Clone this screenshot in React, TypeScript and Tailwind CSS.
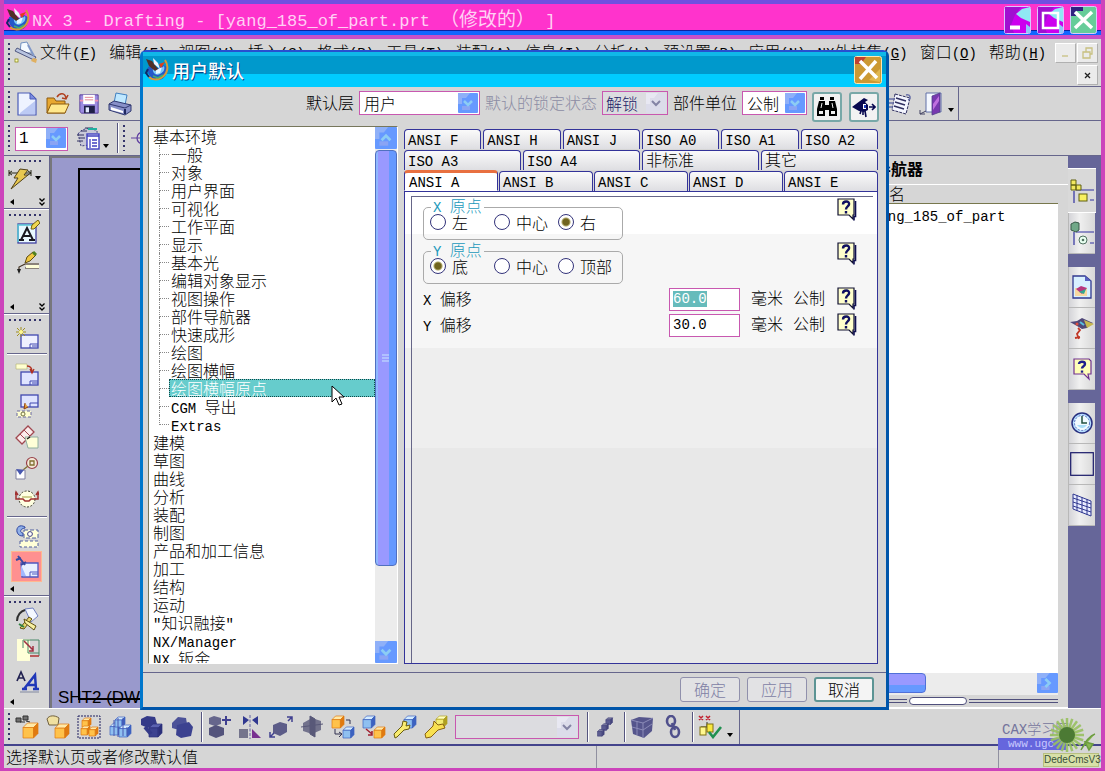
import { useEffect, useRef, useState } from 'react';
import type { ReactNode } from 'react';

/* Mixed text: Latin runs are set in a monospaced face, about half the width of a CJK glyph. */
function T({ children, big }: { children: string; big?: boolean }) {
  const parts = children.match(/[\x00-\x7f]+|[^\x00-\x7f]+/g) ?? [];
  return (
    <>
      {parts.map((p, i) =>
        p.charCodeAt(0) < 128 ? (
          <span
            key={i}
            className={
              big
                ? "font-['Liberation_Mono',monospace] text-[17px] whitespace-pre"
                : "font-['Liberation_Mono',monospace] text-sm leading-none whitespace-pre"
            }
          >
            {p}
          </span>
        ) : (
          <span key={i}>{p}</span>
        ),
      )}
    </>
  );
}

function Svg({ children, size = 'm' }: { children: ReactNode; size?: 'm' | 's' | 'l' }) {
  return (
    <svg
      viewBox="0 0 24 24"
      aria-hidden="true"
      className={size === 'l' ? 'h-[26px] w-[26px] shrink-0' : size === 's' ? 'h-5 w-5 shrink-0' : 'h-6 w-6 shrink-0'}
    >
      {children}
    </svg>
  );
}

const TONES: Record<string, [string, string, string]> = {
  gold: ['#ffe9a8', '#ffc24a', '#e07a10'],
  blue: ['#d4ecff', '#8fc0f0', '#3c62c0'],
  dark: ['#7a7aa0', '#5c5c90', '#44447c'],
  navy: ['#5a62b0', '#3c4290', '#2c307c'],
  gray: ['#9090a8', '#6c6c88', '#585878'],
  lemon: ['#ffffc0', '#f4ec70', '#b0a020'],
};

function Cube({ x, y, s, t }: { x: number; y: number; s: number; t: string }) {
  const [a, b, c] = TONES[t];
  const d = s * 0.3;
  return (
    <g transform={`translate(${x} ${y})`} stroke={c} strokeWidth="0.7" strokeLinejoin="round">
      <path d={`M0 ${d} L${d} 0 H${s} L${s - d} ${d}Z`} fill={a} />
      <path d={`M0 ${d} H${s - d} V${s} H0Z`} fill={b} />
      <path d={`M${s - d} ${d} L${s} 0 V${s - d} L${s - d} ${s}Z`} fill={c} />
    </g>
  );
}

function NxLogo() {
  return (
    <Svg>
      <path d="M3 9c-1 8 4 14 11 13 6-1 9-7 8-13l-4-2-6 3-5-2z" fill="#2458c8" />
      <path d="M8 10c-1 5 3 8 7 6s5-5 4-8l-5 4z" fill="#7cc8f8" />
      <path d="M11 12l6-3-2 6-4 1z" fill="#e8f8ff" />
      <path d="M20 2c4 6 3 14-4 18-4 2-9 2-12-1" fill="none" stroke="#d89838" strokeWidth="2" />
      <path d="M1 1l6 2 6 8-3 2-6-5z" fill="#503028" />
      <path d="M8 0l5 5 2 6-6-5z" fill="#f0f4ff" />
      <path d="M14 6l6-2-4 6z" fill="#e04018" />
      <path d="M3 11l-2 4 3 4" fill="none" stroke="#102868" strokeWidth="2" />
      <path d="M8 18l5 2 5-3" stroke="#40b070" strokeWidth="1.5" fill="none" />
    </Svg>
  );
}

const I: Record<string, ReactNode> = {
  draft: (
    <>
      <path d="M7 2l6-1 5 11H6z" fill="#f4faff" stroke="#7090c0" />
      <path d="M3 7l-2 3 19 9 2-3z" fill="#b8c4e0" stroke="#505880" />
      <path d="M14 4l6 11" stroke="#8098c8" strokeWidth="2" />
      <path d="M19 17l4 1-1 4-5-2z" fill="#e0b060" />
      <rect x="1" y="18" width="3" height="3" fill="#ffffc0" stroke="#808000" strokeWidth="0.7" />
    </>
  ),
  new: (
    <>
      <path d="M3 1h12l6 6v16H3z" fill="#eef3ff" stroke="#4a5cb8" strokeWidth="1.2" />
      <path d="M5 21L20 9v13H5z" fill="#bccaf4" />
      <path d="M15 1v6h6z" fill="#7c8ce0" stroke="#4a5cb8" />
    </>
  ),
  open: (
    <>
      <path d="M1 21V6h7l2 3h9v12z" fill="#e8a830" stroke="#8c5a10" />
      <path d="M1 21L5 12h18l-4 9z" fill="#ffe88c" stroke="#8c5a10" />
      <path d="M11 5c3-5 8-4 9 1m2-3l-2 4-4-1" fill="none" stroke="#b04020" strokeWidth="1.5" />
    </>
  ),
  save: (
    <>
      <path d="M1 1h22v22H3l-2-2z" fill="#9c8ce0" stroke="#4a3090" />
      <path d="M5 1h14v11H5z" fill="#fff" />
      <path d="M7 4h10M7 7h10" stroke="#e07080" />
      <path d="M6 14h13v9H6z" fill="#202048" />
      <path d="M8 16h4v6H8z" fill="#e0e8ff" />
      <path d="M1 8h4M19 8h4" stroke="#f090b0" strokeWidth="2" />
    </>
  ),
  print: (
    <>
      <path d="M8 1l11 2-2 10-11-2z" fill="#bfe8ff" stroke="#4080c0" />
      <path d="M1 12l5-3 17 4v6l-6 4-16-5z" fill="#8890c8" stroke="#303870" />
      <path d="M1 12l16 4 6-3" fill="none" stroke="#303870" />
      <path d="M3 15l12 4v2L3 18z" fill="#fff" />
      <path d="M17 17v5" stroke="#202860" strokeWidth="2" />
    </>
  ),
  layers: (
    <>
      <path d="M2 8c4-6 12-7 19-3l1 15-6 3-3-4-8 1z" fill="#c8c8d8" stroke="#404080" strokeDasharray="2 1.5" />
      <path d="M1 9h7M3 12h6M1 15h6M5 5h6M9 2h8" stroke="#303060" />
      <path d="M12 3h9" stroke="#20b0a0" strokeWidth="2" />
      <rect x="11" y="8" width="12" height="15" fill="#fff" stroke="#4040c0" strokeWidth="1.4" />
      <path d="M11 10h12M14 13v9M16 14h5M16 17h5M16 20h5" stroke="#4040c0" strokeWidth="1.3" />
    </>
  ),
  target: (
    <>
      <circle cx="14" cy="12" r="6" fill="none" stroke="#6040a0" strokeWidth="1.3" />
      <path d="M2 12h22M14 3v18" stroke="#6040a0" />
    </>
  ),
  bolt: (
    <>
      <path d="M1 7h22M1 4v6M23 4v6M4 5L1 7l3 2M20 5l3 2-3 2" fill="none" stroke="#282818" />
      <path d="M12 3l8 1-4 5h4L3 23l7-11H6z" fill="#e8c850" stroke="#504018" />
    </>
  ),
  textA: (
    <>
      <rect x="2" y="4" width="18" height="19" fill="#e8f8ff" stroke="#4040a0" strokeWidth="1.3" />
      <path d="M2 22V5h17" fill="none" stroke="#58c8d8" strokeWidth="1.5" />
      <path d="M5 20l6-12 6 12M7 16h7M3 20h5M13 20h6" fill="none" stroke="#181820" strokeWidth="2" />
      <path d="M15 9l1-4 6-5 2 3-6 6z" fill="#f0d850" stroke="#706010" />
    </>
  ),
  pencil: (
    <>
      <path d="M23 13H9l-6 3v5M9 17h14" fill="none" stroke="#403020" strokeWidth="1.2" />
      <path d="M10 14h13v3H10z" fill="#ffffd8" />
      <path d="M1 18l2 5 2-5z" fill="#202020" />
      <path d="M9 12l2-6 6-5 3 3-6 6z" fill="#f0c840" stroke="#604c10" />
      <path d="M17 1l3 3" stroke="#508020" strokeWidth="3" />
    </>
  ),
  sheetNew: (
    <>
      <rect x="6" y="9" width="17" height="13" fill="#eef0ff" stroke="#4048b0" strokeWidth="1.3" />
      <path d="M15 18h8M15 18v4M17 20h6" stroke="#4048b0" />
      <path d="M6 1v10M1 6h10M2 2l8 8M10 2l-8 8" stroke="#a09020" />
      <circle cx="6" cy="6" r="2" fill="#fff890" />
    </>
  ),
  sheetOpen: (
    <>
      <rect x="6" y="9" width="17" height="13" fill="#dfe4ff" stroke="#4048b0" strokeWidth="1.3" />
      <path d="M15 18h8M15 18v4M17 20h6" stroke="#4048b0" />
      <path d="M1 1h11v5H1z" fill="#ffffd0" stroke="#b0b070" strokeWidth="0.6" />
      <path d="M12 3c4 0 5 2 5 6m-2-3l2 4 2-4" fill="none" stroke="#b03020" strokeWidth="1.3" />
    </>
  ),
  sheetDown: (
    <>
      <rect x="6" y="1" width="17" height="12" fill="#dfe4ff" stroke="#4048b0" strokeWidth="1.3" />
      <path d="M15 9h8M15 9v4" stroke="#4048b0" />
      <path d="M10 9l-1 6 4-2" fill="#e0a040" stroke="#904010" />
      <path d="M2 17h14v6H2z" fill="#ffffd0" stroke="#6868a0" strokeDasharray="3 2" />
      <circle cx="8" cy="20" r="2" fill="none" stroke="#707040" />
    </>
  ),
  section: (
    <>
      <path d="M1 13L13 1l6 6L7 19z" fill="#fbecec" stroke="#a04850" strokeWidth="1.3" />
      <path d="M5 9l6 6M9 5l6 6" stroke="#a04850" />
      <path d="M10 12h13v11H13z" fill="#ffffd8" stroke="#90b0a0" />
      <path d="M12 14l3-2" stroke="#202020" strokeWidth="1.5" />
    </>
  ),
  detail: (
    <>
      <circle cx="17" cy="7" r="5.5" fill="#f4e8d8" stroke="#984048" strokeWidth="1.2" />
      <path d="M15 5h4v4h-4zM13 10l-5 4" fill="none" stroke="#807030" strokeWidth="1.3" />
      <path d="M1 14h9v9H1z" fill="#fff" stroke="#8080a0" />
      <path d="M1 13l8 1-4 5z" fill="#4858b0" />
    </>
  ),
  revolve: (
    <>
      <circle cx="12" cy="12" r="8" fill="#ffffe0" stroke="#404030" strokeDasharray="2 1.5" />
      <path d="M1 6v6h7l2 2h4l2-2h7V6M0 8l1-3 2 3M21 8l2-3 1 3" fill="none" stroke="#a03030" strokeWidth="1.5" />
      <path d="M7 10h10" stroke="#a0a040" />
    </>
  ),
  views: (
    <>
      <path d="M10 3C5 0 1 3 2 8c1 3 3 4 6 4V9c-3 0-4-4 2-5z" fill="#90b0e8" stroke="#3048a0" />
      <path d="M9 6h14v8H9z" fill="#ffffd8" stroke="#5060a0" strokeDasharray="4 2" />
      <circle cx="15" cy="10" r="2.4" fill="#fff" stroke="#404080" />
      <path d="M5 17h18v6H5z" fill="#ffffd8" stroke="#5060a0" strokeDasharray="3 2" />
    </>
  ),
  sheetEdit: (
    <>
      <path d="M6 8h17v14H7z" fill="#e8f0ff" stroke="#5058c0" strokeWidth="1.3" />
      <path d="M15 17h8M15 17v5M17 19h6" stroke="#5058c0" />
      <path d="M3 1l7 9M1 5l5-2M6 10l5-3" stroke="#3848a0" strokeWidth="2" />
      <path d="M6 10v11h5z" fill="#a0b8ff" />
    </>
  ),
  tools: (
    <>
      <path d="M9 2l8-1 5 8-7 6z" fill="#f4f8ff" stroke="#7080c0" />
      <path d="M1 14C1 8 5 4 9 3" fill="none" stroke="#303030" strokeWidth="2" />
      <path d="M4 21l9-11 3 2-8 10z" fill="#e8d870" stroke="#605010" />
      <path d="M8 12l12 7-2 4-9-7z" fill="#f8f0a0" stroke="#605010" />
      <path d="M3 17l5 3" stroke="#308040" strokeWidth="2" />
    </>
  ),
  grid: (
    <>
      <path d="M1 1h13v22H1z" fill="#ffffd8" />
      <path d="M7 2h16v16M12 2v13h11M7 2v8" fill="none" stroke="#488868" />
      <path d="M8 3l9 9m0-4v5h-4" fill="none" stroke="#a03040" strokeWidth="1.5" />
      <path d="M14 18h9" stroke="#b03030" strokeWidth="1.5" />
    </>
  ),
  fonts: (
    <>
      <path d="M1 12l4-9 4 9M3 9h5" fill="none" stroke="#202050" strokeWidth="1.7" />
      <path d="M8 20L19 6l1 14M12 16h8M6 20h5M17 20h6" fill="none" stroke="#2038b8" strokeWidth="2.5" />
      <path d="M4 23h19" stroke="#8088a0" />
    </>
  ),
  scroll: (
    <>
      <path d="M7 2l15 4-4 16-14-4z" fill="#f4f6ff" stroke="#303060" strokeDasharray="3 1" />
      <path d="M8 6l10 3M7 10l10 3M6 14l10 3" stroke="#303060" strokeWidth="1.5" />
      <path d="M1 7h6M0 11h6M0 15h5M18 3c5-1 5 4 2 5" fill="none" stroke="#6870a8" strokeWidth="1.5" />
    </>
  ),
  door: (
    <>
      <path d="M7 1h15v19H7z" fill="#f4f8ff" stroke="#6070a8" />
      <path d="M13 4l8-3v19l-8 3z" fill="#7838b0" stroke="#504088" strokeWidth="0.8" />
      <path d="M14 12l6-8v5l-6 9z" fill="#c070e0" />
      <path d="M1 22l6-3M1 22v-4M1 22h5" stroke="#404060" fill="none" />
    </>
  ),
  findComp: (
    <>
      <path d="M1 3h5v4H1zM8 1h5v4H8zM5 7h5M11 6l4 1" fill="#707070" stroke="#303030" />
      <Cube x={8} y={8} s={15} t="gold" />
    </>
  ),
  openComp: (
    <>
      <path d="M1 4c2-4 8-4 12-1l-1 7H3z" fill="#f0e0a0" stroke="#706040" />
      <Cube x={9} y={9} s={14} t="gold" />
    </>
  ),
  boxed: (
    <>
      <rect x="1" y="1" width="22" height="22" fill="none" stroke="#202060" strokeDasharray="2 1" />
      <Cube x={5} y={3} s={9} t="gold" />
      <Cube x={4} y={11} s={9} t="gold" />
      <Cube x={12} y={12} s={9} t="gold" />
    </>
  ),
  wire: (
    <>
      <Cube x={2} y={8} s={12} t="blue" />
      <Cube x={7} y={2} s={10} t="blue" />
      <Cube x={11} y={10} s={12} t="blue" />
      <path d="M6 5v16M10 3v19M15 3v18M19 12v9" stroke="#4858b0" />
    </>
  ),
  navyCubes: (
    <>
      <path d="M2 4l6-3 8 1 2 7-9 4-7-3z" fill="#343a88" />
      <Cube x={10} y={9} s={13} t="navy" />
      <path d="M6 12l6 7" stroke="#343a88" strokeWidth="4" />
    </>
  ),
  navyCubes2: (
    <>
      <path d="M2 8l6-6 8 1 1 6-8 6-7-2z" fill="#4c5298" />
      <path d="M7 10l12-3 4 5-2 9-10 2-5-3z" fill="#3c4290" />
    </>
  ),
  addComp: (
    <>
      <path d="M2 3l5-2 7 2v6l-6 2-6-2z" fill="#66668c" />
      <path d="M2 13l7-3 8 3v7l-8 3-7-3z" fill="#54547c" />
      <path d="M19 1v9M15 5h9" stroke="#404090" strokeWidth="2" />
    </>
  ),
  mirror: (
    <>
      <path d="M5 1v9l6-5zM20 1v9l-6-5z" fill="#303890" />
      <path d="M12 0v24" stroke="#6060a0" strokeDasharray="3 1.5" />
      <path d="M1 14h9v9H1z" fill="#74748c" />
      <path d="M14 14v9h9z" fill="#783090" />
    </>
  ),
  explode: (
    <>
      <path d="M4 10l7-3 7 2v8l-7 4-7-3z" fill="#5c5c88" />
      <path d="M19 6l4-4M18 2h5v5M5 18l-4 4M1 17v5h5" fill="none" stroke="#404090" strokeWidth="1.5" />
    </>
  ),
  cut: (
    <>
      <path d="M3 8l9-5 9 3v9l-9 4-9-3z" fill="#72728c" />
      <path d="M10 1l5 3v18l-5-3zM1 12l22-3" fill="#585878" stroke="#585878" />
    </>
  ),
  swapA: (
    <>
      <Cube x={1} y={1} s={12} t="gold" />
      <Cube x={12} y={12} s={11} t="blue" />
      <path d="M4 14v5h6m-2-2l3 2-3 3M15 5h4v4" fill="none" stroke="#303050" />
    </>
  ),
  swapB: (
    <>
      <Cube x={1} y={1} s={12} t="blue" />
      <Cube x={12} y={12} s={11} t="gold" />
      <path d="M4 14l6 5m0-3v4H6" fill="none" stroke="#a02030" strokeWidth="1.5" />
    </>
  ),
  wrench: (
    <>
      <Cube x={11} y={1} s={12} t="blue" />
      <path d="M2 23l-1-4 8-8 1-5 4 1-1 4 4-1-1 4-5 1-7 7z" fill="#f8ec70" stroke="#685c10" />
    </>
  ),
  wrench2: (
    <>
      <Cube x={12} y={1} s={11} t="lemon" />
      <path d="M2 23l-1-4 8-8 1-5 4 4 5-1 2 4-7 2-7 7z" fill="#f8e050" stroke="#886010" />
    </>
  ),
  chain3: (
    <>
      <Cube x={13} y={1} s={8} t="dark" />
      <Cube x={8} y={8} s={8} t="dark" />
      <Cube x={3} y={15} s={8} t="dark" />
    </>
  ),
  bigCube: (
    <>
      <path d="M1 5l8-3 14 1-1 13-8 7-11-4z" fill="#55558c" />
      <path d="M1 5l12 3 10-5M13 8v15M2 12l11 3 9-6M7 6v14" fill="none" stroke="#8c8cb8" />
    </>
  ),
  link: (
    <g fill="none" stroke="#50508c" strokeWidth="2.6">
      <ellipse cx="10" cy="6" rx="4" ry="5" />
      <ellipse cx="14" cy="17" rx="4" ry="5" />
      <path d="M11 8l3 7" />
    </g>
  ),
  check: (
    <>
      <path d="M1 1l4 4M5 1L1 5M8 1l4 4M12 1L8 5" stroke="#c02030" strokeWidth="1.5" />
      <path d="M9 7v5M3 12h12" stroke="#303030" />
      <rect x="2" y="12" width="6" height="8" fill="#fff890" stroke="#807010" />
      <rect x="9" y="9" width="6" height="8" fill="#f8e840" stroke="#807010" />
      <path d="M11 17l4 5 8-10" fill="none" stroke="#209050" strokeWidth="2.6" />
    </>
  ),
  asmNav: (
    <>
      <path d="M4 12v12M6 11h18M20 21h4" stroke="#3030a0" strokeWidth="1.2" />
      <path d="M1 1h5v5H1zM1 6h5v5H1zM6 6h5v5H6z" fill="#f0e860" stroke="#606010" />
      <rect x="9" y="15" width="8" height="7" fill="#f8f060" stroke="#606010" />
    </>
  ),
  partNav: (
    <>
      <path d="M4 11v13M6 11h18M20 22h4" stroke="#3030a0" strokeWidth="1.2" />
      <path d="M1 3l4-2 4 1v7l-3 2-5-2z" fill="#70a888" stroke="#385848" />
      <circle cx="13" cy="19" r="4" fill="#e8fff0" stroke="#507060" />
      <circle cx="13" cy="19" r="1.3" fill="#507060" />
    </>
  ),
  docHist: (
    <>
      <path d="M3 1h12l6 5v17H3z" fill="#d8f0ff" stroke="#303890" strokeWidth="1.3" />
      <path d="M15 1v5h6z" fill="#5860c0" />
      <path d="M5 13h12v8H5z" fill="#f8d8a0" />
      <path d="M6 14l5-3 6 2-5 6z" fill="#b83880" />
      <path d="M9 17l7-3-2 5z" fill="#30a890" />
    </>
  ),
  bird: (
    <>
      <path d="M0 6l7-1 5-3 11 5-6 5-5 1-5-3z" fill="#504878" />
      <path d="M14 4l10 4-7 4z" fill="#c8b850" />
      <path d="M8 12l2 2-3 4 2 5M5 22l5-1" fill="none" stroke="#c03828" strokeWidth="1.8" />
      <path d="M10 6l4 3" stroke="#58c0e0" strokeWidth="2" />
      <circle cx="7" cy="8" r="1.500" fill="#e05040" />
    </>
  ),
  helpColor: (
    <>
      <path d="M4 2h15l2 2v13h-3l1 5-5-5H4z" fill="#ffffb8" stroke="#703090" strokeWidth="1.2" />
      <path d="M9 7c0-3 6-3 6 0 0 2.500-3 2-3 4.500" fill="none" stroke="#20208c" strokeWidth="2.400" />
      <path d="M12 13.500v2.200" stroke="#20208c" strokeWidth="2.400" />
    </>
  ),
  clock: (
    <>
      <circle cx="12" cy="12" r="10" fill="#b8e0ff" stroke="#283080" strokeWidth="1.500" />
      <circle cx="12" cy="12" r="7.500" fill="#f0faff" stroke="#5870c0" strokeDasharray="2 1.500" />
      <path d="M12 5v7h5" fill="none" stroke="#205040" strokeWidth="1.5" />
      <path d="M7 14c3 4 7 4 10 0z" fill="#a8dcf8" />
    </>
  ),
  square: <rect x="0.700" y="0.700" width="22.600" height="22.600" fill="none" stroke="#181868" strokeWidth="1.200" />,
  mesh: (
    <>
      <path d="M3 1l18 7v15L3 16z" fill="#e8ecff" stroke="#303890" />
      <path d="M3 5l18 6M3 9l18 6M3 13l18 6M7 2v16M12 4v16M17 6v16" stroke="#303890" />
    </>
  ),
};

function Ico({ n, label, size }: { n: string; label: string; size?: 'm' | 's' | 'l' }) {
  return (
    <button type="button" aria-label={label} className="flex h-[31px] w-[31px] shrink-0 items-center justify-center">
      <Svg size={size}>{I[n]}</Svg>
    </button>
  );
}

function Down() {
  return (
    <svg viewBox="0 0 6 4" className="h-1 w-1.5 shrink-0" aria-hidden="true">
      <path d="M0 0h6L3 4z" />
    </svg>
  );
}

function Grip() {
  return <div className="my-1 w-0.5 shrink-0 self-stretch bg-[repeating-linear-gradient(to_bottom,#33336a_0_2px,#d6d6d6_2px_5px)]" />;
}

function HGrip() {
  return <div className="mx-auto mt-1 h-0.5 w-[35px] shrink-0 bg-[repeating-linear-gradient(to_right,#33336a_0_2px,#d6d6d6_2px_5px)]" />;
}

function VSep() {
  return <div className="mx-1 h-[30px] w-0.5 shrink-0 border-r border-white bg-[#55557f]" />;
}

function Arrows({ both }: { both?: boolean }) {
  return (
    <div className="mt-auto flex h-3 items-center justify-between pr-1 pl-1.5">
      <svg viewBox="0 0 4 6" className="h-1.5 w-1" aria-hidden="true">
        <path d="M4 0v6L0 3z" />
      </svg>
      {both && (
        <svg viewBox="0 0 6 8" className="h-2 w-1.5" aria-hidden="true">
          <path d="M0.500 0.500L3 3 5.500 0.500M0.500 4.500L3 7 5.500 4.500" fill="none" stroke="#000" strokeWidth="1.300" />
        </svg>
      )}
    </div>
  );
}

function ArrowBox({ dir = 'down', off }: { dir?: 'down' | 'up' | 'right'; off?: boolean }) {
  const d = dir === 'down' ? 'M6 8l4 4 4-4' : dir === 'up' ? 'M6 12l4-4 4 4' : 'M8 6l4 4-4 4';
  return (
    <svg viewBox="0 0 20 20" preserveAspectRatio="none" className="h-full w-full" aria-hidden="true">
      <rect width="20" height="20" rx="1" fill={off ? '#dcdcea' : '#6699ff'} />
      <path d="M0 0h12l-4 5H4v6H0z" fill={off ? '#e8e8f2' : '#8fb0f8'} />
      {!off && <path d="M4 13h8v4H4z" fill="#8aa4f4" />}
      <path d={d} fill="none" stroke={off ? '#8484a4' : '#8cccf4'} strokeWidth={off ? '2' : '2.500'} />
    </svg>
  );
}

function Select({ id, options, tone, label }: { id: string; options: string[]; tone?: 'off' | 'plain' | 'latin'; label?: string }) {
  const off = tone === 'off' || tone === 'plain';
  return (
    <span className="relative block h-6 w-full">
      <select
        id={id}
        aria-label={label}
        className={
          off
            ? 'h-6 w-full appearance-none border border-[#c858b0] bg-[#dcdce0] px-[3px] leading-5 text-[#222266] outline-none'
            : tone === 'latin'
              ? "h-6 w-full appearance-none border border-[#c858b0] bg-white px-[3px] font-['Liberation_Mono',monospace] text-base leading-5 outline-none"
              : 'h-6 w-full appearance-none border border-[#c858b0] bg-white px-1 leading-5 text-black outline-none'
        }
      >
        {options.map((o) => (
          <option key={o}>{o}</option>
        ))}
      </select>
      <span className="pointer-events-none absolute top-0.5 right-0.5 h-5 w-5">
        <ArrowBox off={off} />
      </span>
    </span>
  );
}

const MENUS: [string, string][] = [
  ['文件', 'F'], ['编辑', 'E'], ['视图', 'V'], ['插入', 'S'], ['格式', 'R'], ['工具', 'T'], ['装配', 'A'],
  ['信息', 'I'], ['分析', 'L'], ['预设置', 'P'], ['应用', 'N'], ['NX外挂集', 'G'], ['窗口', 'O'], ['帮助', 'H'],
];

function WinButton({ kind }: { kind: 'min' | 'max' | 'close' }) {
  return (
    <button type="button" aria-label={kind} className="h-7 w-[27px] shrink-0">
      <svg viewBox="0 0 27 28" className="h-full w-full" aria-hidden="true">
        <rect x="0.500" y="0.500" width="26" height="27" rx="2" fill={kind === 'close' ? '#66cc99' : '#cc00ee'} stroke="#d8c8ff" />
        {kind === 'close' ? (
          <>
            <path d="M1 1h12v4H6v5H1z" fill="#302080" />
            <path d="M5 6l17 16M22 6L5 22" stroke="#fff" strokeWidth="3.500" />
          </>
        ) : (
          <>
            <path d="M1 1h16l-6 8-4 10 3 8H1z" fill="#a010d0" />
            <path d="M26 1v15l-9-4-5-4 6-5z" fill="#90e8f4" />
            <path d="M22 18l4 3v6h-4z" fill="#90c8f8" />
            {kind === 'min' ? (
              <path d="M6 21.500h10" stroke="#fff" strokeWidth="4" />
            ) : (
              <path d="M6 7h15v15H6z" fill="none" stroke="#fff" strokeWidth="2.500" />
            )}
          </>
        )}
      </svg>
    </button>
  );
}

function MdiButton({ d, label }: { d: string; label: string }) {
  return (
    <button type="button" aria-label={label} className="h-5 w-[21px] border border-t-white border-r-[#b0b0b0] border-b-[#b0b0b0] border-l-white bg-[#ebebeb]">
      <svg viewBox="0 0 19 18" className="h-full w-full" aria-hidden="true">
        <path d={d} fill="none" stroke={label === 'close document' ? '#222' : '#c8c080'} strokeWidth="1.300" />
      </svg>
    </button>
  );
}

function TopBars() {
  return (
    <>
      <header className="flex h-[39px] shrink-0 items-center border-t-4 border-b-4 border-t-[#7050e0] border-b-[#c850c8] bg-[linear-gradient(to_bottom,#ff33cc_0_26px,#1020a0_26px_27px,#1166ff_27px)] pr-1 pl-0.5">
        <NxLogo />
        <h1 className="ml-0.5 flex-1 text-[19px] leading-6 font-normal whitespace-pre text-[#ffd0f4]">
          <T big>NX 3 - Drafting - [yang_185_of_part.prt （修改的） ]</T>
        </h1>
        <div className="flex gap-1.5">
          <WinButton kind="min" />
          <WinButton kind="max" />
          <WinButton kind="close" />
        </div>
      </header>
      <div className="flex h-12 shrink-0 border-b border-[#66668c] pr-[3px] pl-1">
        <Grip />
        <div className="mt-0.5 ml-1">
          <Svg>{I.draft}</Svg>
        </div>
        <nav className="flex flex-1 gap-3 pt-0.5 pl-0.5 leading-5 whitespace-nowrap">
          {MENUS.map(([t, k]) => (
            <a key={t} href="#menu" className="flex h-5 items-baseline">
              <span>
                <T>{t}</T>
                <span className="font-['Liberation_Mono',monospace] text-sm leading-none">
                  (<u>{k}</u>)
                </span>
              </span>
            </a>
          ))}
        </nav>
        <div className="grid grid-cols-2 content-start gap-x-px gap-y-0.5 pt-1">
          <MdiButton label="minimise document" d="M6 12h6" />
          <MdiButton label="restore document" d="M5 8h7v6H5zM8 8V4h6v6h-2" />
          <span />
          <MdiButton label="close document" d="M7 7l5 5M12 7l-5 5" />
        </div>
      </div>
      <div className="flex h-[34px] shrink-0 border-b border-[#66668c] pr-[142px]">
        <div className="flex flex-1 items-center border-r border-[#66668c] pr-1 pl-1">
          <Grip />
          <div className="ml-px flex">
            <Ico n="new" label="New" />
            <Ico n="open" label="Open" />
            <Ico n="save" label="Save" size="s" />
            <Ico n="print" label="Print" />
          </div>
          <div className="ml-auto flex items-center">
            <Ico n="scroll" label="Macro" />
            <Ico n="door" label="Exit" />
            <div className="mt-3 ml-0.5">
              <Down />
            </div>
          </div>
        </div>
      </div>
      <div className="flex h-[35px] shrink-0 items-center border-b border-[#66668c] pl-1">
        <Grip />
        <div className="ml-[5px] w-[53px]">
          <Select id="layer" label="Layer" options={['1']} tone="latin" />
        </div>
        <div className="ml-1">
          <Ico n="layers" label="Layer settings" />
        </div>
        <div className="mt-4 mr-1">
          <Down />
        </div>
        <VSep />
        <Grip />
        <Ico n="target" label="Origin" />
      </div>
    </>
  );
}

function LeftBar() {
  return (
    <div className="flex w-[46px] shrink-0 flex-col border-r border-[#66668c]">
      <div className="flex h-[53px] flex-col border-b border-[#66668c]">
        <HGrip />
        <div className="flex items-center">
          <Ico n="bolt" label="Quick dimension" />
          <Down />
        </div>
        <Arrows both />
      </div>
      <div className="flex h-[105px] flex-col border-t border-b border-t-white border-b-[#66668c]">
        <HGrip />
        <div className="flex flex-col pl-2">
          <Ico n="textA" label="Annotation" />
          <Ico n="pencil" label="Label" />
        </div>
        <Arrows both />
      </div>
      <div className="flex h-[282px] flex-col border-t border-b border-t-white border-b-[#66668c]">
        <HGrip />
        <div className="flex flex-col items-center pt-px">
          <Ico n="sheetNew" label="New sheet" />
          <div className="mb-1 h-0.5 w-10 border-b border-white bg-[#66668c]" />
          <Ico n="sheetOpen" label="Open sheet" />
          <Ico n="sheetDown" label="Add view" />
          <Ico n="section" label="Section view" />
          <Ico n="detail" label="Detail view" />
          <Ico n="revolve" label="Revolved section" />
          <div className="my-0.5 h-0.5 w-10 border-b border-white bg-[#66668c]" />
          <Ico n="views" label="Update views" />
          <div className="border border-[#ffb890] bg-[#ff9090]">
            <button type="button" aria-label="Edit sheet" className="flex h-[29px] w-[29px] items-center justify-center">
              <Svg>{I.sheetEdit}</Svg>
            </button>
          </div>
        </div>
        <Arrows />
      </div>
      <div className="flex flex-1 flex-col border-t border-white">
        <HGrip />
        <div className="flex flex-col pl-2">
          <Ico n="tools" label="Preferences" />
          <Ico n="grid" label="Grid" />
          <Ico n="fonts" label="Text style" />
        </div>
        <Arrows />
      </div>
    </div>
  );
}

function ResTab({ n, label, on }: { n: string; label: string; on?: boolean }) {
  return (
    <button
      type="button"
      aria-label={label}
      className={
        on
          ? 'flex h-[45px] w-7 items-center justify-center border-t border-b border-white bg-[#d9d9d9]'
          : 'flex h-[41px] w-[27px] items-center justify-center border-b border-l border-[#b8b8b8] bg-[linear-gradient(to_right,#d4d4d8,#f0f0f0_40%,#d8d8d8)]'
      }
    >
      <Svg>{I[n]}</Svg>
    </button>
  );
}

function NavPanel() {
  return (
    <div className="flex w-[270px] shrink-0">
      <div className="flex min-w-0 flex-1 flex-col border-b border-white">
        <h2 className="h-[29px] border-b border-white pl-3 text-base leading-6 font-bold">装配导航器</h2>
        <div className="mr-2.5 h-[19px] border-b border-[#77774c] pl-[26px] leading-[17px]">部件名</div>
        <ul className="mr-2.5 flex-1 bg-white pl-10">
          <li className="leading-5">
            <T>yang_185_of_part</T>
          </li>
        </ul>
        <div className="mr-2.5 flex h-[22px] shrink-0 bg-[#ececec]">
          <div className="h-5 w-[95px] rounded-r-sm border border-[#5070d8] bg-[linear-gradient(to_bottom,#9999ff_0_60%,#6699ff_60%)]" />
          <div className="ml-auto h-5 w-[21px]">
            <ArrowBox dir="right" />
          </div>
        </div>
        <div className="mr-2.5 flex h-3 shrink-0 items-center gap-0.5">
          <div className="h-1 w-[76px] border-y border-[#50507c]" />
          <div className="h-2 w-[58px] rounded-sm border border-[#50507c] bg-white" />
          <div className="h-1 flex-1 border-y border-[#50507c]" />
        </div>
      </div>
      <aside className="flex w-[33px] shrink-0 flex-col bg-[#666699] pt-3">
        <ResTab n="asmNav" label="Assembly navigator" on />
        <ResTab n="partNav" label="Part navigator" />
        <div className="mt-[13px]">
          <ResTab n="docHist" label="History" />
          <ResTab n="bird" label="Training" />
          <ResTab n="helpColor" label="Help" />
        </div>
        <div className="mt-[13px]">
          <ResTab n="clock" label="Recent" />
          <ResTab n="square" label="Palette" />
          <ResTab n="mesh" label="Materials" />
        </div>
      </aside>
    </div>
  );
}

function BottomBar() {
  return (
    <div className="flex h-[37px] shrink-0 border-b-2 border-[#44448c]">
      <div className="flex items-center border-r border-[#66668c] pr-1.5 pl-1">
        <Grip />
        <div className="ml-px flex">
          <Ico n="findComp" label="Find component" />
          <Ico n="openComp" label="Open component" />
          <Ico n="boxed" label="Isolate" />
          <Ico n="wire" label="Show" />
          <Ico n="navyCubes" label="Hide" />
          <Ico n="navyCubes2" label="Replace" />
        </div>
        <VSep />
        <div className="-ml-1 flex">
          <Ico n="addComp" label="Add" />
          <Ico n="mirror" label="Mirror" />
          <Ico n="explode" label="Explode" />
          <Ico n="cut" label="Cut" />
          <Ico n="swapA" label="Substitute" />
          <Ico n="swapB" label="Reposition" />
          <Ico n="wrench" label="Mate" />
          <Ico n="wrench2" label="Constraints" />
        </div>
        <div className="mx-1 w-[124px]">
          <Select id="ref" label="Reference set" options={['']} tone="plain" />
        </div>
        <VSep />
        <div className="-ml-1">
          <Ico n="chain3" label="Sequence" size="s" />
        </div>
        <VSep />
        <div className="-ml-1 flex">
          <Ico n="bigCube" label="Clearance" />
          <Ico n="link" label="Link" />
        </div>
        <VSep />
        <div className="-ml-1">
          <Ico n="check" label="Check" />
        </div>
        <div className="mt-4 ml-0.5">
          <Down />
        </div>
      </div>
    </div>
  );
}

function Watermark() {
  return (
    <div className="pointer-events-none absolute right-0.5 bottom-0 flex w-[101px] flex-col">
      <div className="pl-1 text-sm leading-[19px] whitespace-nowrap text-[#74749c]">
        <span className="font-['Liberation_Mono',monospace] text-sm leading-none">CAX</span>学习网
      </div>
      <div className="h-3 w-[68px] bg-[#6666dd] pl-2.5 font-['Liberation_Mono',monospace] text-[11px] leading-3 whitespace-nowrap text-[#c8c8ff]">www.ugc</div>
      <div className="h-[18px]" />
      <svg viewBox="0 0 54 38" className="absolute right-0 bottom-3.5 h-[38px] w-[54px]" aria-hidden="true">
        <g stroke="#98c060" strokeWidth="2.500" opacity="0.900">
          {[0, 18, 36, 54, 72, 90, 108, 126, 144, 162].map((a) => (
            <path key={a} d="M22 2v34" transform={`rotate(${a} 22 19)`} />
          ))}
        </g>
        <circle cx="22" cy="19" r="8" fill="#4c7a34" />
        <path d="M36 34c4-8 8-14 14-16M40 26l8 2-4 6z" fill="#88b850" stroke="#6c9c40" strokeWidth="1.500" />
      </svg>
      <div className="absolute right-0 bottom-px w-14 border border-[#b8c080] bg-[#d8e0a8] text-center font-['Liberation_Sans',sans-serif] text-[10px] leading-3 text-[#385038]">
        DedeCmsV3
      </div>
    </div>
  );
}

const CHILDREN = ['一般', '对象', '用户界面', '可视化', '工作平面', '显示', '基本光', '编辑对象显示', '视图操作', '部件导航器', '快速成形', '绘图', '绘图横幅', '绘图横幅原点', 'CGM 导出', 'Extras'];
const ROOTS = ['建模', '草图', '曲线', '分析', '装配', '制图', '产品和加工信息', '加工', '结构', '运动', '"知识融接"', 'NX/Manager', 'NX 钣金'];

function Tree() {
  return (
    <div className="flex h-[538px] w-[250px] shrink-0 border border-t-[#77775c] border-r-white border-b-white border-l-[#77775c] bg-white">
      <ul className="flex-1 overflow-hidden leading-[18px] whitespace-nowrap">
        <li className="h-[18px] pl-1">基本环境</li>
        <li>
          <ul>
            {CHILDREN.map((c, i) => (
              <li key={c} className="flex h-[18px] pl-2.5">
                <span className="flex w-2.5 shrink-0 flex-col">
                  <span className="h-2.5 border-b border-l border-dotted border-[#888]" />
                  {i < CHILDREN.length - 1 && <span className="h-2 border-l border-dotted border-[#888]" />}
                </span>
                {c === '绘图横幅原点' ? (
                  <span className="flex-1 border border-dotted border-[#104848] bg-[#66cccc] pl-px leading-4 text-white">{c}</span>
                ) : (
                  <span className="pl-0.5">
                    <T>{c}</T>
                  </span>
                )}
              </li>
            ))}
          </ul>
        </li>
        {ROOTS.map((r) => (
          <li key={r} className="h-[18px] pl-1">
            <T>{r}</T>
          </li>
        ))}
      </ul>
      <div className="flex w-[22px] shrink-0 flex-col bg-[#ececec]">
        <div className="h-[22px]">
          <ArrowBox dir="up" />
        </div>
        <div className="mt-px flex h-[416px] items-center justify-center rounded-sm border border-[#5070c0] bg-[linear-gradient(to_right,#90b8ff_0_2px,#9999ff_2px_13px,#6699ff_13px)]">
          <svg viewBox="0 0 8 8" className="h-2 w-2" aria-hidden="true">
            <path d="M0 1h7M0 4h7M0 7h7" stroke="#c8e8ff" />
          </svg>
        </div>
        <div className="mt-auto h-[22px]">
          <ArrowBox />
        </div>
      </div>
    </div>
  );
}

function Tab({ t, on }: { t: string; on?: boolean }) {
  return (
    <button
      type="button"
      role="tab"
      aria-selected={!!on}
      className={
        on
          ? '-mt-px -mb-px flex h-[21px] items-start rounded-t-sm border border-t-[3px] border-t-[#e87040] border-r-[#333399] border-b-white border-l-[#333399] bg-white pl-1 leading-[15px]'
          : 'flex h-5 items-start rounded-t-sm border border-b-0 border-[#333399] bg-[linear-gradient(to_bottom,#fafafa,#dedee2)] pl-[3px] leading-[17px]'
      }
    >
      <span>
        <T>{t}</T>
      </span>
    </button>
  );
}

function HelpButton() {
  return (
    <button type="button" aria-label="帮助" className="h-6 w-5 shrink-0">
      <svg viewBox="0 0 20 24" className="h-full w-full" aria-hidden="true">
        <path d="M1 1h16v16h-1v4l-4-4H1z" fill="#ffffcc" stroke="#101030" strokeWidth="1.200" />
        <path d="M18.500 3v15.500h-1.500v4" fill="none" stroke="#101050" strokeWidth="1.600" />
        <path d="M6 6.500c0-4 7-4 6 0-.3 2-3 2-3 5" fill="none" stroke="#101060" strokeWidth="2.400" />
        <path d="M9 13v2.500" stroke="#101060" strokeWidth="2.400" />
      </svg>
    </button>
  );
}

function Group({ name, legend, options, value }: { name: string; legend: string; options: string[]; value: string }) {
  const [v, setV] = useState(value);
  return (
    <div className="flex h-11 items-start justify-between">
      <fieldset className="h-[42px] w-[200px] rounded-[5px] border border-[#aaaaaa] pl-1.5">
        <legend className="ml-px h-[18px] px-0.5 leading-[14px] text-[#2299bb]">
          <T>{legend}</T>
        </legend>
        <div className="-mt-1 flex">
          {options.map((o) => (
            <label key={o} className="flex w-16 items-center gap-1.5 leading-5 whitespace-nowrap">
              <input
                type="radio"
                name={name}
                checked={v === o}
                onChange={() => setV(o)}
                className="h-4 w-4 shrink-0 appearance-none rounded-full border border-[#33337a] bg-white checked:bg-[radial-gradient(circle,#706420_0_3px,#b0a868_4px,#fff_5px)]"
              />
              {o}
            </label>
          ))}
        </div>
      </fieldset>
      <HelpButton />
    </div>
  );
}

function Offset({ id, label, value, picked }: { id: string; label: string; value: string; picked?: boolean }) {
  const ref = useRef<HTMLInputElement>(null);
  useEffect(() => {
    if (picked) {
      ref.current?.focus();
      ref.current?.select();
    }
  }, [picked]);
  return (
    <div className="flex h-[26px] items-center">
      <label htmlFor={id} className="flex-1 pb-0.5 leading-5">
        <T>{label}</T>
      </label>
      <input
        ref={ref}
        id={id}
        defaultValue={value}
        className="h-[23px] w-[71px] border border-[#c858b0] bg-white px-[3px] font-['Liberation_Mono',monospace] text-sm outline-none selection:bg-[#66bbbb] selection:text-white"
      />
      <span className="ml-[11px] w-8 pb-1">毫米</span>
      <span className="mr-3 ml-2.5 w-8 pb-1">公制</span>
      <HelpButton />
    </div>
  );
}

function Dialog() {
  return (
    <section
      role="dialog"
      aria-label="用户默认"
      className="absolute top-[50px] left-[136px] flex w-[749px] flex-col rounded-t-md border-x-[3px] border-t-2 border-b-[3px] border-t-[#2850d0] border-r-[#0055aa] border-b-[#0055aa] border-l-[#0077cc] bg-[#d6d6d6]"
    >
      <div className="flex h-[35px] items-center bg-[linear-gradient(to_bottom,#10b8e8_0_4px,#0099cc_4px_22px,#00ccff_22px)] pr-1 pl-0.5">
        <NxLogo />
        <h2 className="ml-[3px] flex-1 text-lg leading-6 font-medium text-white [text-shadow:1px_1px_0_#004488]">用户默认</h2>
        <button type="button" aria-label="关闭" className="h-7 w-7">
          <svg viewBox="0 0 28 28" className="h-full w-full" aria-hidden="true">
            <rect x="0.500" y="0.500" width="27" height="27" rx="2" fill="#cc9933" stroke="#ffe8b0" />
            <path d="M1 1h11l-5 7H1z" fill="#c04030" />
            <path d="M15 24l11-11v13z" fill="#e0b850" />
            <path d="M6 5l17 17M22 5L6 23" stroke="#fff" strokeWidth="3.500" />
          </svg>
        </button>
      </div>
      <div className="flex h-[39px] items-start justify-end gap-[5px] pt-1 pr-[7px] leading-[22px]">
        <label htmlFor="lvl">默认层</label>
        <div className="w-[121px]">
          <Select id="lvl" options={['用户']} />
        </div>
        <label htmlFor="lock" className="text-[#8c8ca4]">默认的锁定状态</label>
        <div className="w-[66px]">
          <Select id="lock" options={['解锁']} tone="off" />
        </div>
        <label htmlFor="unit" className="">部件单位</label>
        <div className="w-[65px]">
          <Select id="unit" options={['公制']} />
        </div>
        <button type="button" aria-label="查找" className="mt-px flex h-[30px] w-[30px] items-center justify-center rounded-[3px] border-2 border-[#78a8a8] bg-[#f2f2f2]">
          <Svg>
            <path d="M5 2h4v3H5zM15 2h4v3h-4zM4 6h6v4h4V6h6l2 8v7h-8v-6h-4v6H2v-7z" fill="#000" />
            <path d="M4 16h4v3H4zM16 16h4v3h-4z" fill="#f2f2f2" />
            <path d="M7 8l-1 5M17 8l1 5" fill="none" stroke="#f2f2f2" strokeWidth="1" />
          </Svg>
        </button>
        <button type="button" aria-label="查看" className="mt-px ml-0.5 flex h-[30px] w-[30px] items-center justify-center rounded-[3px] border-2 border-[#78a8a8] bg-[#f2f2f2]">
          <Svg>
            <path d="M0 12L12 3l4 2-3 2 3 3v5l-4 2-5-1z" fill="#080850" />
            <path d="M11 9h3v5h-3z" fill="#fff" />
            <path d="M12 10h2v3h-2z" fill="#2040c0" />
            <path d="M17 12h6M20 9l3 3-3 3M9 16l-1 3M11 16v4M13 16l1 6" fill="none" stroke="#080850" strokeWidth="1.600" />
          </Svg>
        </button>
      </div>
      <div className="flex gap-1.5 pr-2 pl-[5px]">
        <Tree />
        <div className="mt-[3px] flex min-w-0 flex-1 flex-col">
          <div role="tablist" className="flex flex-col gap-px">
            <div className="grid grid-cols-6 gap-x-0.5">
              {['ANSI F', 'ANSI H', 'ANSI J', 'ISO A0', 'ISO A1', 'ISO A2'].map((t) => <Tab key={t} t={t} />)}
            </div>
            <div className="grid grid-cols-4 gap-x-0.5">
              {['ISO A3', 'ISO A4', '非标准', '其它'].map((t) => <Tab key={t} t={t} />)}
            </div>
            <div className="grid grid-cols-5 gap-x-px">
              {['ANSI A', 'ANSI B', 'ANSI C', 'ANSI D', 'ANSI E'].map((t, i) => <Tab key={t} t={t} on={i === 0} />)}
            </div>
          </div>
          <div className="flex-1 border border-[#333399] bg-[linear-gradient(to_bottom,#ffffff_0_42px,#f6f6f6_42px_156px,#eeeeee_156px_256px,#e8e8e8_256px)] pt-1 pr-1 pl-1.5">
            <div className="h-full border-t border-l border-[#666688] pt-px pr-4 pl-[11px]">
              <Group name="x" legend="X 原点" options={['左', '中心', '右']} value="右" />
              <Group name="y" legend="Y 原点" options={['底', '中心', '顶部']} value="底" />
              <Offset id="xo" label="X 偏移" value="60.0" picked />
              <Offset id="yo" label="Y 偏移" value="30.0" />
            </div>
          </div>
        </div>
      </div>
      <div className="mt-2 flex h-[35px] items-center justify-end gap-[7px] border-t border-[#66668c] pr-3 pb-0.5">
        <button type="button" disabled className="h-[25px] w-[60px] rounded-[3px] border border-[#9090ac] bg-[#e2e2e4] leading-5 text-[#8080a4]">确定</button>
        <button type="button" disabled className="h-[25px] w-[60px] rounded-[3px] border border-[#9090ac] bg-[#e2e2e4] leading-5 text-[#8080a4]">应用</button>
        <button type="button" className="h-[25px] w-[60px] rounded-[3px] border-2 border-[#5c9494] bg-[#f4f4f4] leading-5 text-black">取消</button>
      </div>
    </section>
  );
}

function Cursor() {
  return (
    <svg viewBox="0 0 14 22" className="pointer-events-none absolute top-[385px] left-[327px] h-[22px] w-3.5" aria-hidden="true">
      <path d="M1 1v16l4-4 3 7 3-1-3-7h5z" fill="#fff" stroke="#000" />
    </svg>
  );
}

export default function App() {
  return (
    <div className="relative flex min-h-screen w-full flex-col overflow-hidden border-r-4 border-b-4 border-l-4 border-[#cc44bb] bg-[#d6d6d6] font-['Noto_Sans_CJK_SC',sans-serif] text-base leading-5 font-light text-black">
      <TopBars />
      <main className="flex min-h-[552px] flex-1 border-b border-white">
        <LeftBar />
        <div className="flex min-w-0 flex-1 flex-col border-t-2 border-l-2 border-[#77777c] bg-[#9999cc]">
          <div className="mt-2.5 ml-[26px] flex-1 border-t-2 border-b-2 border-l-2 border-black" />
          <div className="-mt-3.5 h-[22px] pl-1.5 font-['Liberation_Sans',sans-serif] text-[17px] leading-6 font-normal">SHT2 (DWG)</div>
        </div>
        <NavPanel />
      </main>
      <BottomBar />
      <footer className="flex h-[22px] shrink-0 leading-5">
        <div className="w-[593px] border-r border-[#9090a0] pl-0.5">选择默认页或者修改默认值</div>
        <div className="mr-[102px] flex-1 border-r border-[#9090a0]" />
      </footer>
      <Watermark />
      <Dialog />
      <Cursor />
    </div>
  );
}
